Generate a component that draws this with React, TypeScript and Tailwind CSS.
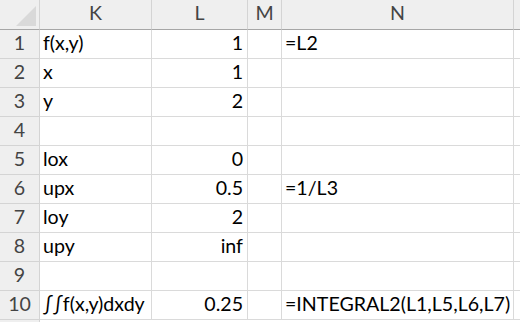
const rows: [string, string, string, string][] = [
  ['f(x,y)', '1', '', '=L2'],
  ['x', '1', '', ''],
  ['y', '2', '', ''],
  ['', '', '', ''],
  ['lox', '0', '', ''],
  ['upx', '0.5', '', '=1/L3'],
  ['loy', '2', '', ''],
  ['upy', 'inf', '', ''],
  ['', '', '', ''],
  ['∫∫f(x,y)dxdy', '0.25', '', '=INTEGRAL2(L1,L5,L6,L7)'],
];

const cols = ['K', 'L', 'M', 'N'];

export default function App() {
  return (
    <div
      className="w-[520px] h-[322px] overflow-hidden bg-white text-[19.6px] text-black"
      style={{ fontFamily: 'Lato, "Liberation Sans", sans-serif' }}
    >
      <div className="grid grid-cols-[40px_112px_96px_34px_232px_6px] grid-rows-[30px_repeat(10,29px)_3px]">
        {/* corner */}
        <div className="relative bg-[#efefef] border-r border-b border-r-[#d4d4d4] border-b-[#a6a6a6]">
          <div className="absolute left-[16px] top-[6px] w-[20px] h-[20px] bg-[#d9d9d9] [clip-path:polygon(100%_0,100%_100%,0_100%)]" />
        </div>
        {cols.map((c) => (
          <div
            key={c}
            className="flex items-end justify-center pb-[2px] bg-[#efefef] border-r border-b border-r-[#d4d4d4] border-b-[#a6a6a6] text-[#444]"
          >
            {c}
          </div>
        ))}
        <div className="bg-[#efefef] border-b border-b-[#a6a6a6]" />

        {rows.map((r, i) => (
          <Row key={i} n={i + 1} cells={r} />
        ))}

        <div className="bg-[#efefef] border-r border-r-[#d4d4d4]" />
        <div className="col-span-5" />
      </div>
    </div>
  );
}

function Row({ n, cells }: { n: number; cells: [string, string, string, string] }) {
  return (
    <>
      <div className="flex items-end justify-center pb-[1px] bg-[#efefef] border-r border-b border-r-[#d4d4d4] border-b-[#d4d4d4] text-[#444]">
        {n}
      </div>
      <div className="flex items-end pl-[3px] pb-[1px] border-r border-b border-[#dadada] whitespace-nowrap">
        {cells[0]}
      </div>
      <div className="flex items-end justify-end pr-[4px] pb-[1px] border-r border-b border-[#dadada] whitespace-nowrap">
        {cells[1]}
      </div>
      <div className="flex items-end pl-[3px] pb-[1px] border-r border-b border-[#dadada]">{cells[2]}</div>
      <div className="flex items-end pl-[3px] pb-[1px] border-r border-b border-[#dadada] whitespace-nowrap">
        {cells[3]}
      </div>
      <div className="border-b border-[#dadada]" />
    </>
  );
}
